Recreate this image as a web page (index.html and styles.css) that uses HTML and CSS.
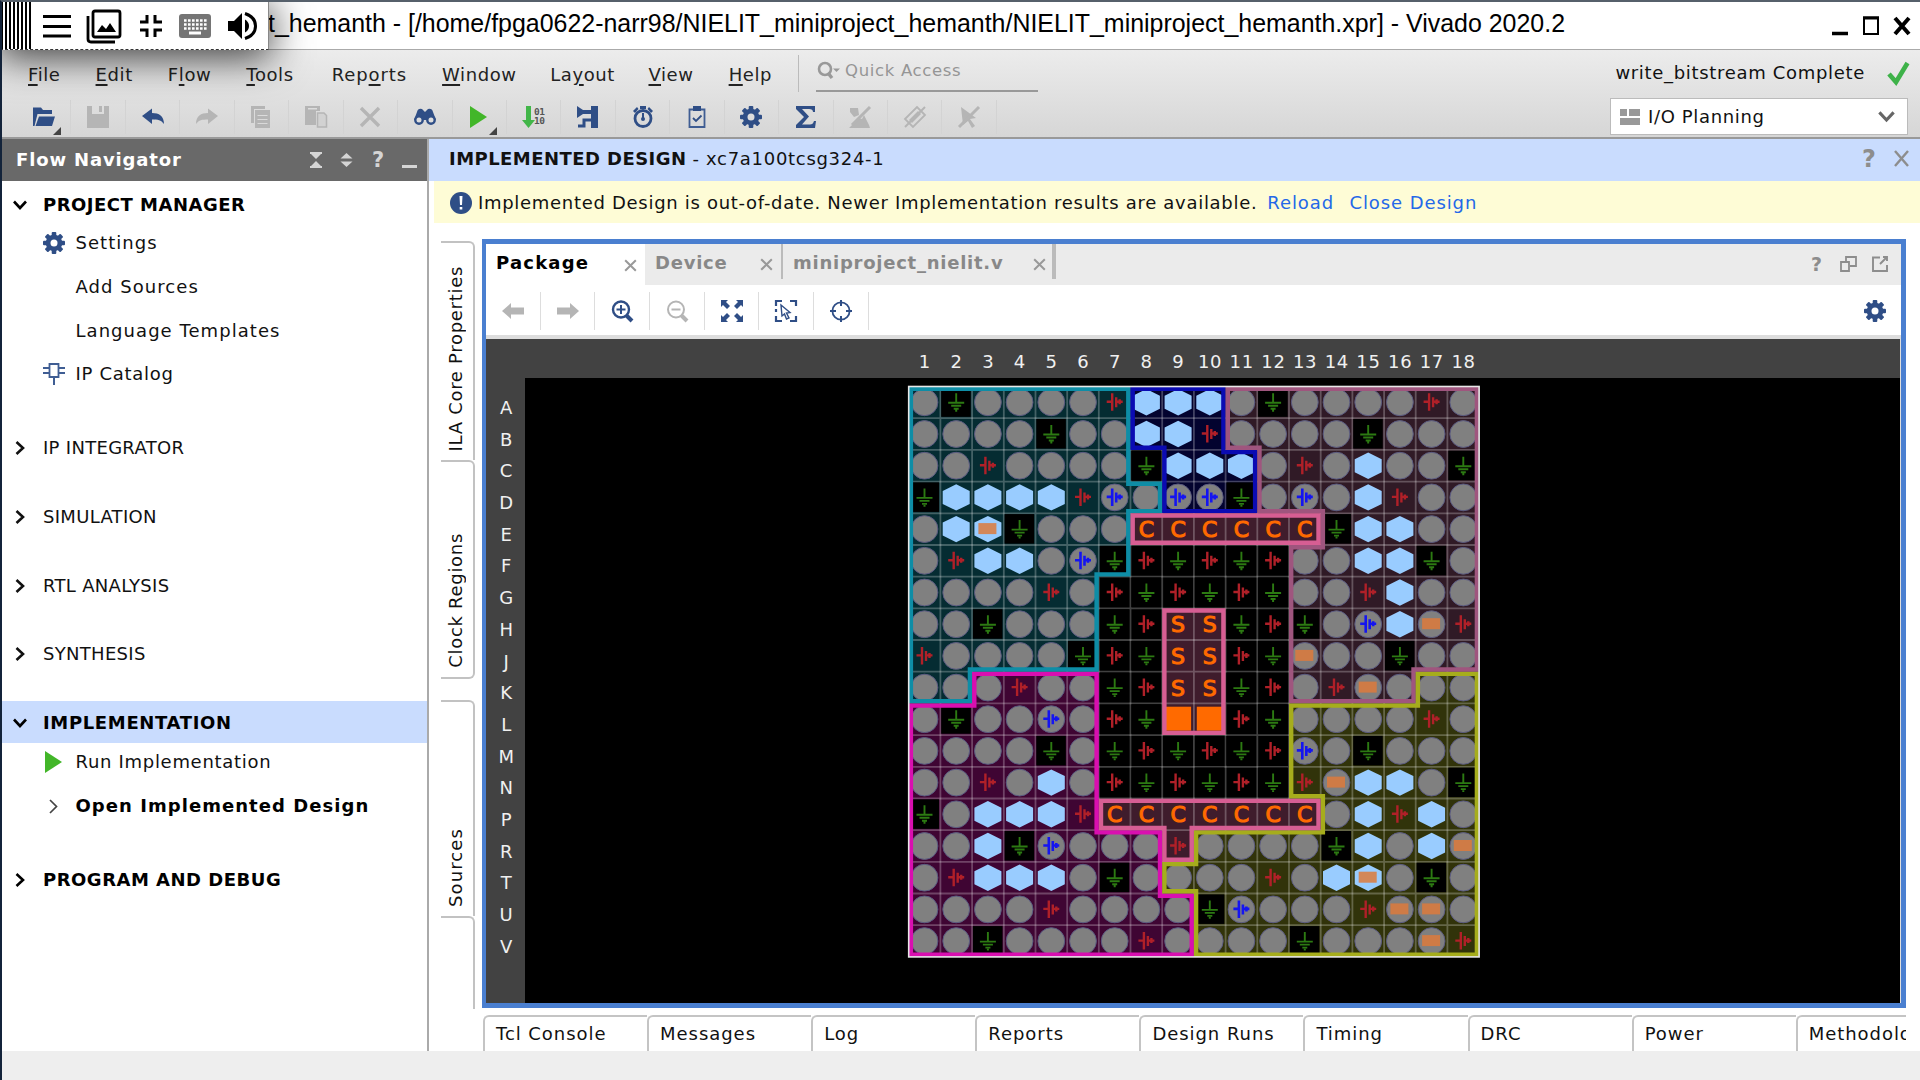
FILE: index.html
```html
<!DOCTYPE html>
<html lang="en">
<head>
<meta charset="utf-8">
<title>Vivado 2020.2</title>
<link rel="stylesheet" href="styles.css">
</head>
<body>
<svg class="defs" width="0" height="0">
  <symbol id="gear" viewBox="0 0 22 22"><g fill="currentColor"><rect x="8.7" y="0" width="4.6" height="22" rx="1"/><rect x="0" y="8.7" width="22" height="4.6" rx="1"/><rect x="8.7" y="0" width="4.6" height="22" rx="1" transform="rotate(45 11 11)"/><rect x="0" y="8.7" width="22" height="4.6" rx="1" transform="rotate(45 11 11)"/><circle cx="11" cy="11" r="8.3"/></g><circle cx="11" cy="11" r="3.5" fill="var(--hole,#fff)"/></symbol>
  <symbol id="x" viewBox="0 0 22 22"><path d="M2 2L20 20M20 2L2 20" stroke="currentColor" stroke-width="3.4" fill="none"/></symbol>
  <symbol id="chev" viewBox="0 0 16 16"><path d="M2 4.5L8 11L14 4.5" fill="none" stroke="currentColor" stroke-width="2.6"/></symbol>
  <symbol id="play" viewBox="0 0 22 22"><path d="M2 0L19 11L2 22Z" fill="#42b629"/></symbol>
  <symbol id="arrow" viewBox="0 0 22 22"><path d="M0 11L9 3V7.5H22V14.5H9V19Z" fill="currentColor"/></symbol>
  <symbol id="undo" viewBox="0 0 22 22"><path d="M0 10L10 2.500V7C17 7 22 10 22 18C19 14 16 13.500 10 13.500V18Z" fill="currentColor"/></symbol>
</svg>

<div class="window">
  <header class="titlebar">
    <span class="title">t_hemanth - [/home/fpga0622-narr98/NIELIT_miniproject_hemanth/NIELIT_miniproject_hemanth.xpr] - Vivado 2020.2</span>
    <svg class="winctl" width="84" height="28" viewBox="0 0 84 28"><path d="M1 21.500H17" stroke="#000" stroke-width="3.500"/><path d="M33 5.500H47V22H33Z" fill="none" stroke="#000" stroke-width="2"/><path d="M32 6H48" stroke="#000" stroke-width="3"/><path d="M64 6L78 22M78 6L64 22" stroke="#000" stroke-width="4"/></svg>
  </header>

  <div class="overlay">
    <div class="grip"></div>
    <svg width="30" height="28" viewBox="0 0 30 28"><path d="M1 4.500H29M1 14.500H29M1 24H29" stroke="#000" stroke-width="2.800"/></svg>
    <svg class="shots" width="36" height="36" viewBox="0 0 36 36"><path d="M9 3H32Q34 3 34 5V27Q34 29 32 29H9Q7 29 7 27V5Q7 3 9 3Z" fill="none" stroke="#000" stroke-width="2.800"/><path d="M2 8V31Q2 34 5 34H29" fill="none" stroke="#000" stroke-width="2.800"/><path d="M11 24L16 17L20 21L24 15L30 24Z"/></svg>
    <svg width="24" height="24" viewBox="0 0 24 24"><path d="M8 1V8H1M16 1V8H23M1 16H8V23M23 16H16V23" fill="none" stroke="#000" stroke-width="3"/></svg>
    <svg width="32" height="24" viewBox="0 0 32 24"><rect width="32" height="24" rx="3" fill="#757575"/><path d="M5 6.500H28M5 10.500H28M5 14.500H28" stroke="#fff" stroke-width="2.600" stroke-dasharray="2.600 1.400"/><path d="M10 19H22" stroke="#fff" stroke-width="3"/></svg>
    <svg width="30" height="30" viewBox="0 0 30 30"><path d="M0 10H6L14 2V28L6 20H0Z"/><path d="M17 8.500Q21 11 21 15T17 21.500Z"/><path d="M17 2.500Q27.500 6 27.500 15T17 27.500" fill="none" stroke="#000" stroke-width="3"/></svg>
  </div>

  <div class="topbars">
    <nav class="menubar">
      <span><u>F</u>ile</span><span><u>E</u>dit</span><span>F<u>l</u>ow</span><span><u>T</u>ools</span><span class="m-reports">Rep<u>o</u>rts</span><span><u>W</u>indow</span><span class="m-close">La<u>y</u>out</span><span class="m-close"><u>V</u>iew</span><span><u>H</u>elp</span>
      <i class="menusep"></i>
      <div class="search"><svg width="24" height="20" viewBox="0 0 24 20"><circle cx="8" cy="8" r="6" fill="none" stroke="#999" stroke-width="2.600"/><path d="M11 12L15 17" stroke="#999" stroke-width="3.400"/><path d="M16 7.500H23L19.500 11Z" fill="#999"/></svg>Quick Access</div>
      <div class="status">write_bitstream Complete<svg width="23" height="24" viewBox="0 0 23 24"><path d="M2 13L9 21L20.500 2" fill="none" stroke="#3eb249" stroke-width="4.600"/></svg></div>
    </nav>
    <div class="toolbar">
      <div class="slot drop"><svg viewBox="0 0 22 22"><path d="M0 20V1.500H8L10 4H19V8H4.500L1.500 20Z"/><path d="M6 10.500H22L19 20H2.500Z"/></svg></div>
      <div class="slot off"><svg viewBox="0 0 22 22"><path d="M0 0H5V8H17V0H22V22H0Z"/><path d="M12 0H15V6H12Z"/></svg></div>
      <div class="slot"><svg><use href="#undo"/></svg></div>
      <div class="slot off"><svg class="flip"><use href="#undo"/></svg></div>
      <div class="slot off"><svg viewBox="0 0 22 22"><path d="M1 0H15V3H4V17H1Z"/><path d="M5 4H20V22H5ZM7.500 9H17.500V10H7.500ZM7.500 13H17.500V14H7.500ZM7.500 17H17.500V18H7.500Z" fill-rule="evenodd"/></svg></div>
      <div class="slot off"><svg viewBox="0 0 22 22"><path d="M0 0H15V5H11V19H0ZM3 2H12V3.500H3Z" fill-rule="evenodd"/><path d="M12.500 7H19L21.500 9.500V21H12.500Z" fill="#d2d2d2" stroke="#b5b5b5" stroke-width="1.500"/></svg></div>
      <div class="slot off"><svg><use href="#x"/></svg></div>
      <div class="slot"><svg viewBox="0 0 22 22"><path d="M3 6Q4 2 8 3L11 6L14 3Q18 2 19 6L22 14H0Z"/><circle cx="5" cy="14" r="3.700" fill="#ddd" stroke="#2f4e86" stroke-width="2.400"/><circle cx="17" cy="14" r="3.700" fill="#ddd" stroke="#2f4e86" stroke-width="2.400"/></svg></div>
      <div class="slot drop"><svg><use href="#play"/></svg></div>
      <div class="slot"><svg viewBox="0 0 22 22"><path d="M3 0H8V14H12L5.500 22L-1 14H3Z" fill="#42b649"/><text x="11" y="8.500" class="bits">01</text><text x="11" y="18" class="bits">10</text></svg></div>
      <div class="slot"><svg viewBox="0 0 22 22"><path d="M0 0L6 4H14V0H21V22H14V8H6L0 12Z"/><path d="M1 20H7V14H16" fill="none" stroke="#2f4e86" stroke-width="3"/></svg></div>
      <div class="slot"><svg viewBox="0 0 22 22"><circle cx="11" cy="12.500" r="8" fill="none" stroke="#2f4e86" stroke-width="2.800"/><path d="M8 0H14V3H8ZM1 5L5 1L6.500 3L3 7ZM21 5L17 1L15.500 3L19 7ZM10 7H12V12H10Z"/><circle cx="11" cy="13" r="2"/></svg></div>
      <div class="slot"><svg viewBox="0 0 22 22"><path d="M3.500 3.500H18.500V21H3.500Z" fill="none" stroke="#3f5d93" stroke-width="1.800"/><path d="M7 0H15V5H7Z"/><path d="M7 12L10 15L15.500 9.500" fill="none" stroke="#2f4e86" stroke-width="1.800"/></svg></div>
      <div class="slot"><svg><use href="#gear"/></svg></div>
      <div class="slot"><svg viewBox="0 0 22 22"><path d="M1 0H20V6H18Q18 3 14 3H7L14 10.500L7 18.500H15Q18 18.500 19 15H21L20 22H1V19L9 11L1 3Z"/></svg></div>
      <div class="slot off"><svg viewBox="0 0 22 22"><path d="M1 2H9L10 9L5 11L1 6ZM0 22L10 12L13 13L15 9L20 19L21 22Z"/><path d="M21 1L3 19" stroke="#b5b5b5" stroke-width="3"/></svg></div>
      <div class="slot off"><svg viewBox="0 0 22 22"><path d="M1 13L13 1L21 9L9 21Z" fill="none" stroke="#b5b5b5" stroke-width="1.800"/><path d="M5 14L14 5L17 8L8 17Z"/><path d="M21 1L1 21" stroke="#b5b5b5" stroke-width="2"/></svg></div>
      <div class="slot off"><svg viewBox="0 0 22 22"><path d="M3 1L18 12L12 13L17 20L14 22L10 15L5 19Z"/><path d="M21 1L1 21" stroke="#b5b5b5" stroke-width="3"/></svg></div>
      <div class="select"><svg width="20" height="16" viewBox="0 0 20 16"><path d="M0 0H7V7H0ZM9 0H20V7H9ZM0 9H20V16H0Z" fill="#999"/></svg><span>I/O Planning</span><svg class="caret" width="19" height="19"><use href="#chev"/></svg></div>
    </div>
  </div>

  <div class="main">
    <aside class="nav">
      <div class="navhead"><b>Flow Navigator</b>
        <svg width="112" height="20" viewBox="0 0 112 20" fill="#d5d5d5"><path d="M3 2H15V4H3ZM4 4H14L9 9ZM9 11L14 16H4ZM3 16H15V18H3ZM33.500 8.500L39.500 3L45.500 8.500ZM33.500 11.500H45.500L39.500 17Z"/><text x="65" y="17" class="q">?</text><path d="M95 15H110V18H95Z"/></svg>
      </div>
      <div class="sec bold"><svg><use href="#chev"/></svg>PROJECT MANAGER</div>
      <div class="item first wide"><svg><use href="#gear"/></svg>Settings</div>
      <div class="item wide"><svg></svg>Add Sources</div>
      <div class="item wide"><svg></svg>Language Templates</div>
      <div class="item"><svg viewBox="0 0 22 22"><path d="M6.500 1H15.500V14H6.500Z" fill="none" stroke="#3f5d93" stroke-width="1.800"/><path d="M11 14V22M0 5H6M0 10H6M16 5H22M16 10H22" stroke="#3f5d93" stroke-width="2"/></svg>IP Catalog</div>
      <div class="sec gap1"><svg class="right"><use href="#chev"/></svg><span class="tight">IP INTEGRATOR</span></div>
      <div class="sec gap"><svg class="right"><use href="#chev"/></svg><span class="tight">SIMULATION</span></div>
      <div class="sec gap"><svg class="right"><use href="#chev"/></svg><span class="tight">RTL ANALYSIS</span></div>
      <div class="sec gap"><svg class="right"><use href="#chev"/></svg><span class="tight">SYNTHESIS</span></div>
      <div class="sec bold sel"><svg><use href="#chev"/></svg>IMPLEMENTATION</div>
      <div class="item first run"><svg><use href="#play"/></svg>Run Implementation</div>
      <div class="item bold wide"><svg viewBox="0 0 22 22"><path d="M7 5L13.500 11.500L7 18" fill="none" stroke="#444" stroke-width="1.700"/></svg>Open Implemented Design</div>
      <div class="sec gap2 bold"><svg class="right"><use href="#chev"/></svg>PROGRAM AND DEBUG</div>
    </aside>

    <section class="work">
      <div class="workhead"><b>IMPLEMENTED DESIGN</b><span class="part">- xc7a100tcsg324-1</span>
        <svg width="50" height="24" viewBox="0 0 50 24"><text x="0" y="20" class="qbig">?</text><path d="M33 4L46 19M46 4L33 19" stroke="#8d8d8d" stroke-width="2.400"/></svg></div>
      <div class="notice"><svg width="22" height="22" viewBox="0 0 22 22"><circle cx="11" cy="11" r="11" fill="#2f4e86"/><path d="M9.500 4H12.500L12 13H10ZM9.700 15H12.300V17.500H9.700Z" fill="#fff"/></svg><span class="msg">Implemented Design is out-of-date. Newer Implementation results are available.</span><a>Reload</a><a class="close">Close Design</a></div>
      <div class="body">
        <div class="sidetabs">
          <div class="st s1"><span>ILA Core Properties</span></div><div class="st s2"><span>Clock Regions</span></div><div class="st s3"><span>Sources</span></div><div class="st s4"></div>
        </div>
        <div class="right-col">
          <div class="panel">
            <div class="tabs">
              <div class="tab t1">Package<svg><use href="#x"/></svg></div>
              <div class="tab t2">Device<svg><use href="#x"/></svg></div>
              <div class="tab t3">miniproject_nielit.v<svg><use href="#x"/></svg></div>
              <svg class="tabctl" width="80" height="20" viewBox="0 0 80 20"><text x="2" y="17" class="qtab">?</text><path d="M32 8H40V17H32Z M37 8V3H47V12H41" fill="none" stroke="#8d8d8d" stroke-width="1.800"/><path d="M71 3.500H64V17H78V11M71 10L78 3M78 7V3H74" fill="none" stroke="#8d8d8d" stroke-width="1.900"/></svg>
            </div>
            <div class="ptools">
              <div class="ps off"><svg><use href="#arrow"/></svg></div>
              <div class="ps off"><svg class="flip"><use href="#arrow"/></svg></div>
              <div class="ps"><svg viewBox="0 0 22 22"><circle cx="10" cy="9.500" r="8" fill="none" stroke="#2f4e86" stroke-width="2.400"/><path d="M10 5V14M5.500 9.500H14.500" stroke="#2f4e86" stroke-width="2"/><path d="M15 15L21 21" stroke="#2f4e86" stroke-width="4"/></svg></div>
              <div class="ps off"><svg viewBox="0 0 22 22"><circle cx="10" cy="9.500" r="8" fill="none" stroke="#b5b5b5" stroke-width="2"/><path d="M5.500 9.500H14.500" stroke="#b5b5b5" stroke-width="2"/><path d="M15 15L21 21" stroke="#b5b5b5" stroke-width="4"/></svg></div>
              <div class="ps"><svg viewBox="0 0 22 22"><path d="M0 0H7L5 2L9 6L6 9L2 5L0 7ZM22 0V7L20 5L16 9L13 6L17 2L15 0ZM0 22V15L2 17L6 13L9 16L5 20L7 22ZM22 22H15L17 20L13 16L16 13L20 17L22 15Z"/></svg></div>
              <div class="ps"><svg viewBox="0 0 22 22"><path d="M1 6V1H7M15 1H21V6M1 16V21H7M21 16V21H15M1 9V12" fill="none" stroke="#2f4e86" stroke-width="2.200"/><path d="M6 5L15 12.500L11.500 13L14 18L11.500 19L9.500 14L7 16Z" fill="none" stroke="#2f4e86" stroke-width="1.400"/></svg></div>
              <div class="ps"><svg viewBox="0 0 22 22"><circle cx="11" cy="11" r="8.600" fill="none" stroke="#2f4e86" stroke-width="1.800"/><path d="M11 0V6M11 16V22M0 11H6M16 11H22" stroke="#2f4e86" stroke-width="2"/></svg></div>
              <svg class="cfg"><use href="#gear"/></svg>
            </div>
            <div class="canvas">
              <div class="cols" id="cols"></div>
              <div class="rows" id="rows"></div>
              <div class="field"><svg id="pkg" width="572" height="572" viewBox="-0.700 -0.500 572 572"></svg></div>
            </div>
          </div>
          <div class="btabs"><div>Tcl Console</div><div>Messages</div><div>Log</div><div>Reports</div><div>Design Runs</div><div>Timing</div><div>DRC</div><div>Power</div><div class="last">Methodology</div></div>
        </div>
      </div>
    </section>
  </div>
  <footer class="foot"></footer>
</div>
<script src="package.js"></script>
</body>
</html>
```
FILE: package.js
```js
// Pin kinds: o user pin, h placed port, y placed port (fixed), x fixed pin, g ground, r/b supplies, C/S/O config pins
const map = [
  'ogoooorhhhogooooro',
  'oooogoohhroooogooo',
  'oorooooghhhorohoog',
  'ghhhhrbobbgobohroo',
  'ohygoooCCCCCCghhoo',
  'orhhobgrgrgroohhgo',
  'oooororgrgrgoorhoo',
  'oogooogrSSgrgobhxr',
  'roooogrgSSrgxoogoo',
  'oooroogrSSgrorxooo',
  'ogooborgOOrgooooro',
  'oooogogrgrgrbogooo',
  'oorohorgrgrgrxhhog',
  'gohhhrCCCCCCCohrho',
  'oohgbooorooooghohx',
  'orhhhogoooorohyogo',
  'ooooroooogbooorxxo',
  'oogooooroooogoooxr'.replace(' ', 'o').slice(0, 18)
];
map[17] = ['oog', 'oooo', 'r', 'oooo', 'g', 'ooo', 'xr'].join('');
const P = 31.69, N = 18, W = P * N;
const regions = [
  ['#052c32', '#0e8da6', '0,0 7,0 7,3 8,3 8,4 7,4 7,6 6,6 6,9 2,9 2,10 0,10'],
  ['#03032f', '#0b0bb3', '7,0 10,0 10,2 11,2 11,4 8,4 8,2 7,2'],
  ['#301a26', '#9f557e', '10,0 18,0 18,9 16,9 16,10 12,10 12,5 13,5 13,4 11,4 11,2 10,2'],
  ['#3f0533', '#d90fb0', '0,10 2,10 2,9 6,9 6,14 8,14 8,16 9,16 9,18 0,18'],
  ['#31330a', '#a6ad1c', '16,9 18,9 18,18 9,18 9,16 8,16 8,15 9,15 9,14 13,14 13,13 12,13 12,10 16,10'],
  ['#3f1c2c', '#d75e93', '7,4 13,4 13,5 7,5'],
  ['#3f1c2c', '#d75e93', '8,7 10,7 10,11 8,11'],
  ['#3f1c2c', '#d75e93', '6,13 13,13 13,14 9,14 9,15 8,15 8,14 6,14']
];
const pts = s => s.split(' ').map(p => p.split(',').map(v => (v * P).toFixed(1)).join(',')).join(' ');
let out = '';
regions.forEach(r => { out += `<polygon points="${pts(r[2])}" fill="${r[0]}"/>`; });
for (let i = 1; i < N; i++) {
  const v = (i * P).toFixed(1);
  out += `<path class="gl" d="M${v} 0V${W}M0 ${v}H${W}"/>`;
}
const circle = '<circle r="13.4" class="pin"/>';
const hex = '<path class="port" d="M0-13.200L13.500-6.500V6.500L0 13.200L-13.500 6.500V-6.500Z"/>';
const bar = '<rect x="-9.500" y="-6" width="18" height="11" class="bar"/>';
const supply = '<path d="M-8 -.5H-2.500M-2.500-9V8.500M1.500-5V5M1.500-.5H8M5-3V2"/>';
const glyph = {
  o: circle, h: hex, x: circle + bar, y: hex + bar,
  g: '<rect class="gnd-bg" x="-15" y="-15" width="29.500" height="29.500"/><path class="gnd" d="M0-9V1M-8 .5H8M-5 3.500H5M-2.500 6.500H2.500M-1 8.500H1"/>',
  r: `<g class="vcc">${supply}</g>`, b: `${circle}<g class="vio">${supply}</g>`,
  C: '<text class="cfgpin" y="8">C</text>', S: '<text class="cfgpin" y="8">S</text>',
  O: '<rect x="-13" y="-12.500" width="26" height="24" fill="#ff6a00"/>'
};
map.forEach((row, j) => [...row].forEach((k, i) => {
  out += `<g transform="translate(${((i + .5) * P).toFixed(1)} ${((j + .5) * P).toFixed(1)})">${glyph[k]}</g>`;
}));
regions.forEach((r, i) => {
  out += `<clipPath id="r${i}"><polygon points="${pts(r[2])}"/></clipPath><polygon points="${pts(r[2])}" fill="none" stroke="${r[1]}" stroke-width="8.800" clip-path="url(#r${i})"/>`;
});
out += `<rect x="0" y="0" width="${W}" height="${W}" fill="none" stroke="#e8e8e8" stroke-width="1.600"/>`;
document.getElementById('pkg').innerHTML = out;
document.getElementById('cols').innerHTML = Array.from({ length: N }, (_, i) => `<span>${i + 1}</span>`).join('');
document.getElementById('rows').innerHTML = [...'ABCDEFGHJKLMNPRTUV'].map(c => `<span>${c}</span>`).join('');
```
FILE: styles.css
```css
* { box-sizing: border-box; }
body { margin: 0; width: 1920px; height: 1080px; overflow: hidden; font: 18px/22px "DejaVu Sans", sans-serif; color: #111; background: #fff; letter-spacing: .7px; }
svg { display: block; flex: none; overflow: visible; }
.defs { position: absolute; }
.window { position: relative; height: 1080px; display: flex; flex-direction: column; border-top: 2px solid #56606b; border-left: 2px solid #13233a; overflow: hidden; }
.titlebar { height: 47px; flex: none; display: flex; align-items: center; justify-content: space-between; padding: 0 5px 5px 266px; background: #fff; }
.title { font: 24.950px/28px "Liberation Sans", sans-serif; color: #000; letter-spacing: 0; white-space: nowrap; }
.winctl { margin-top: 5px; }
.overlay { position: absolute; left: -2px; top: -1px; width: 269px; height: 49px; background: #fff; border: 1px dashed #333; border-right: 1px solid #888; box-shadow: 0 6px 38px 2px rgba(0,0,0,.75); z-index: 2; display: flex; align-items: center; gap: 16.500px; }
.overlay .grip { width: 31px; height: 47px; margin-right: -7px; background: repeating-linear-gradient(90deg, #000 0 2px, #fff 2px 4px); }
.overlay .shots { margin-left: -2px; }
.topbars { height: 90px; flex: none; background: linear-gradient(#ececec, #d6d6d6); border-top: 1px solid #aaa; border-bottom: 2px solid #999; }
.menubar { height: 46px; display: flex; align-items: center; padding-left: 26px; padding-top: 4px; gap: 35px; color: #222; }
.menubar > span { letter-spacing: .6px; margin-top: -1px; }
.menubar > .m-reports { letter-spacing: .9px; margin-left: 3px; }
.menubar > .m-close { margin-left: -1.500px; }
.menubar u { text-underline-offset: 3px; text-decoration-thickness: 1.500px; }
.menusep { width: 1px; height: 37px; background: #bbb; margin-left: -9px; margin-top: -4px; }
.search { width: 222px; height: 36px; margin: -3px 0 0 -18px; border-bottom: 2px solid #999; display: flex; align-items: center; gap: 4px; padding: 0 0 3px 1px; font-size: 16.500px; color: #959595; white-space: nowrap; letter-spacing: .65px; }
.status { margin: -4px 10px 0 auto; display: flex; gap: 22px; align-items: center; color: #111; letter-spacing: .68px; }
.toolbar { display: flex; height: 39px; padding-left: 15px; align-items: center; --hole: #ddd; }
.slot { width: 54.450px; flex: none; height: 34px; display: flex; align-items: center; justify-content: center; color: #2f4e86; fill: #2f4e86; border-right: 1px solid #d3d3d3; position: relative; margin-top: 3px; }
.slot svg, .ps svg { width: 22px; height: 22px; }
.slot.off, .ps.off { color: #b5b5b5; fill: #b5b5b5; }
.flip { transform: scaleX(-1); }
.drop::after { content: ""; position: absolute; right: 9px; bottom: -1px; border-left: 8px solid transparent; border-bottom: 8px solid #444; }
.bits { font: bold 9.500px/10px "DejaVu Sans Mono", monospace; fill: #555; letter-spacing: -.5px; }
.select { margin: 2px 12px 0 auto; width: 298px; height: 37px; flex: none; border: 1px solid #bbb; background: #fff; display: flex; align-items: center; padding: 0 11px 0 9px; gap: 8px; letter-spacing: .65px; }
.select .caret { margin-left: auto; color: #666; }
.main { flex: 1; display: flex; min-height: 0; }
.nav { width: 427px; border-right: 2px solid #aaa; flex: none; display: flex; flex-direction: column; }
.navhead { height: 42px; background: #696969; color: #fff; display: flex; align-items: center; justify-content: space-between; padding: 0 8px 0 14px; letter-spacing: .85px; }
.q { font: bold 21px "DejaVu Sans", sans-serif; }
.qbig { font: bold 24px "DejaVu Sans", sans-serif; fill: #8d8d8d; }
.qtab { font: bold 19px "DejaVu Sans", sans-serif; fill: #8d8d8d; }
.sec { height: 42px; flex: none; display: flex; align-items: center; gap: 15px; padding: 5px 0 0 10px; letter-spacing: .5px; }
.sec svg { width: 16px; height: 16px; }
.gap1 { margin-top: 28.500px; }
.gap { margin-top: 26.700px; }
.gap2 { margin-top: 28px; }
.right { transform: rotate(-90deg); }
.tight { letter-spacing: .3px; }
.bold { font-weight: bold; color: #000; }
.sel { background: #c9dcfe; padding-top: 1px; margin-top: 28.500px; letter-spacing: .65px; }
.item { height: 43.800px; flex: none; display: flex; align-items: center; gap: 11px; padding-left: 40.500px; }
.item svg { width: 22px; height: 22px; color: #2f4e86; }
.item.wide { letter-spacing: 1.050px; }
.item.first { height: 42px; padding-bottom: 3px; }
.item.run { margin-top: -1px; }
.work { flex: 1; min-width: 0; display: flex; flex-direction: column; }
.workhead { height: 42px; background: #c9dcfe; display: flex; align-items: center; padding: 0 8px 2px 20px; color: #111; flex: none; letter-spacing: .45px; }
.workhead svg { margin-left: auto; }
.part { margin-left: 6px; letter-spacing: .7px; }
.notice { height: 42px; margin-left: 5px; background: #fefcd6; display: flex; align-items: center; padding: 1px 0 0 16px; flex: none; white-space: nowrap; }
.msg { margin-left: 6px; }
.notice a { color: #2468e8; margin-left: 10px; letter-spacing: .9px; }
.notice a.close { margin-left: 15.500px; }
.body { flex: 1; display: flex; padding: 16px 0 0 12px; min-height: 0; }
.sidetabs { width: 34px; margin-right: 7px; flex: none; display: flex; flex-direction: column; padding-top: 2px; }
.st { border: 2px solid #c2c2c2; border-left: 0; border-bottom: 0; border-radius: 0 6px 0 0; display: flex; align-items: flex-end; justify-content: center; }
.st span { writing-mode: vertical-rl; transform: rotate(180deg); white-space: nowrap; padding-top: 9px; padding-left: 2px; }
.s1 { height: 219px; } .s2 { height: 219px; border-bottom: 2px solid #c2c2c2; border-radius: 0 6px 6px 0; }
.s3 { height: 216px; margin-top: 21px; } .s3 span { letter-spacing: 1.100px; }
.s4 { height: 93px; }
.right-col { width: 1424px; flex: none; display: flex; flex-direction: column; }
.panel { border: 5px solid #4a7fd0; border-left-width: 4px; height: 769px; display: flex; flex-direction: column; }
.tabs { height: 41px; background: #ebebeb; display: flex; align-items: center; flex: none; font-weight: bold; color: #888; }
.tab { height: 35px; display: flex; align-items: center; justify-content: space-between; padding: 2px 7px 0 10px; margin-bottom: 6px; letter-spacing: .75px; }
.tab svg { width: 13px; height: 13px; color: #999; margin-top: 4px; }
.t1 { width: 159px; height: 41px; margin: 0; background: #fff; color: #000; padding: 0 8px 3px 10px; letter-spacing: 1.200px; }
.t2 { width: 138px; padding-right: 8px; border-right: 2px solid #bbb; }
.t3 { width: 273px; border-right: 4px solid #bbb; padding-left: 10px; padding-right: 6px; }
.tabctl { margin-left: auto; margin-right: 12px; margin-top: -2px; }
.ptools { height: 54px; border-bottom: 4px solid #ddd; display: flex; align-items: center; flex: none; }
.ps { width: 54.700px; height: 38px; display: flex; align-items: center; justify-content: center; border-right: 1px solid #ddd; color: #2f4e86; fill: #2f4e86; margin-top: 1px; }
.cfg { width: 22px; height: 22px; margin-left: auto; margin-right: 15px; margin-top: 1px; color: #2f4e86; }
.canvas { flex: 1; min-height: 0; display: grid; grid-template: 39px 1fr / 39px 1fr; background: #424242; color: #f0f0f0; border-right: 1px solid #ddd; }
.cols { grid-column: 1 / 3; display: flex; padding-left: 423px; align-items: center; padding-top: 6px; }
.cols span { width: 31.690px; text-align: center; flex: none; }
.rows { display: flex; flex-direction: column; padding: 14px 0 0 2px; }
.rows span { height: 31.690px; flex: none; text-align: center; line-height: 31.690px; }
.field { background: #000; padding: 8px 0 0 383px; min-height: 0; overflow: hidden; }
.gl { fill: none; stroke: #fff; stroke-opacity: .25; stroke-width: 1.800; }
.pin { fill: #808080; stroke: #5a5a80; stroke-width: 1; }
.port { fill: #99ccff; }
.bar { fill: #dd7a3c; fill-opacity: .85; }
.gnd-bg { fill: #000; }
.gnd { stroke: #2c7a12; stroke-width: 1.900; fill: none; }
.vcc path { stroke: #b02028; stroke-width: 2.400; fill: none; }
.vio path { stroke: #1414f0; stroke-width: 2.600; fill: none; }
.cfgpin { font: 22px "DejaVu Sans", sans-serif; fill: #ff6a00; stroke: #ff6a00; stroke-width: 1.100; text-anchor: middle; letter-spacing: 0; }
.btabs { display: flex; margin: 7px 0 0 1px; height: 36px; overflow: hidden; letter-spacing: .95px; }
.btabs div { width: 164.100px; flex: none; border: 2px solid #c4c4c4; border-right: 0; border-bottom: 0; border-radius: 6px 0 0 0; padding: 6px 0 0 11px; white-space: nowrap; }
.btabs .last { width: 110px; overflow: hidden; }
.foot { height: 29px; flex: none; background: #eee; }
```
